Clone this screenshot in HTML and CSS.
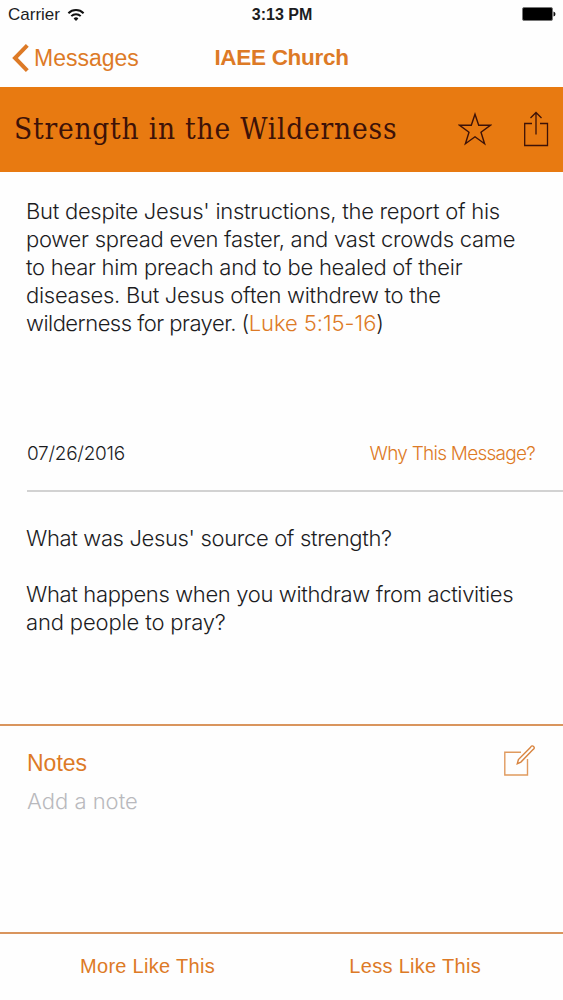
FILE: index.html
```html
<!DOCTYPE html>
<html lang="en">
<head>
  <meta charset="UTF-8">
  <meta name="viewport" content="width=device-width, initial-scale=1.0">
  <title>IAEE Church</title>
  <link rel="stylesheet" href="styles.css">
</head>
<body>
  <div class="status-bar">
    <div class="carrier">
      <span>Carrier</span>
      <svg class="wifi" width="18" height="14" viewBox="0 0 18 14" fill="none" stroke="#111" stroke-width="2">
        <path d="M1.4 5.2a10.7 10.7 0 0 1 15.2 0"/>
        <path d="M4.3 8.1a6.6 6.6 0 0 1 9.4 0"/>
        <path d="M9 13L6.6 10.5a3.4 3.4 0 0 1 4.8 0z" fill="#111" stroke="none"/>
      </svg>
    </div>
    <span class="time">3:13 PM</span>
    <svg class="battery" width="34" height="14" viewBox="0 0 34 14">
      <rect x="0.5" y="0.5" width="30" height="13" rx="1.5" fill="#000" stroke="#777"/>
      <path d="M31.5 4.5q2 .5 2 2.5t-2 2.5z" fill="#111"/>
    </svg>
  </div>

  <div class="nav">
    <a class="back">
      <svg width="17" height="28" viewBox="0 0 17 28" fill="none" stroke="#dd7a26" stroke-width="4">
        <path d="M15.3 1.4L3 14l12.3 12.6"/>
      </svg>
      <span>Messages</span>
    </a>
    <span class="nav-title">IAEE Church</span>
  </div>

  <div class="banner">
    <h1>Strength in the Wilderness</h1>
    <div class="actions">
      <svg width="34" height="34" viewBox="0 0 34 34" fill="none" stroke="#3d1208" stroke-width="1.4">
        <path d="M17 2.2L20.7 13.3H32.4L23 20.3L26.6 31.7L17 24.8L7.4 31.7L11 20.3L1.6 13.3H13.3Z"/>
      </svg>
      <svg width="26" height="36" viewBox="0 0 26 36" fill="none" stroke="#3d1208" stroke-width="1.3">
        <path d="M9 12.5H1.7V34.5H24.5V12.5H17"/>
        <path d="M13 23.5V1.5M7.5 7L13 1.5L18.5 7"/>
      </svg>
    </div>
  </div>

  <div class="message">
    <p class="verse">
      But despite Jesus' instructions, the report of his<br>
      power spread even faster, and vast crowds came<br>
      to hear him preach and to be healed of their<br>
      diseases. But Jesus often withdrew to the<br>
      <span class="tight">wilderness for prayer. (</span><a class="link">Luke 5:15-16</a>)
    </p>
    <div class="meta">
      <span class="date">07/26/2016</span>
      <a class="why">Why This Message?</a>
    </div>
    <div class="questions">
      <p>What was Jesus' source of strength?</p>
      <p>What happens when you withdraw from activities<br><span class="loose">and people to pray?</span></p>
    </div>
  </div>

  <div class="notes">
    <div class="notes-text">
      <h2>Notes</h2>
      <p class="placeholder">Add a note</p>
    </div>
    <svg class="edit" width="32" height="32" viewBox="0 0 32 32" fill="none" stroke="#e09a5e" stroke-width="1.4">
      <path d="M18 7.2H1.8V30H24.5V14"/>
      <path d="M14.3 18.7L15.4 14.6L27.6 2.2Q29-.1 30.6 1.5T30 4.6L17.9 17.1Z" stroke="#d8843f"/>
    </svg>
  </div>

  <div class="footer">
    <a class="more">More Like This</a>
    <a class="less">Less Like This</a>
  </div>
</body>
</html>
```
FILE: styles.css
```css
:root {
  --orange: #e87a11;
  --link: #dd7a26;
  --line: #d9955d;
  --text: #1c1c1e;
}
* {
  margin: 0;
  padding: 0;
  box-sizing: border-box;
}
body {
  width: 563px;
  height: 1000px;
  display: flex;
  flex-direction: column;
  background: #fefefe;
  color: var(--text);
  font-family: "Liberation Sans", Arial, sans-serif;
  overflow: hidden;
}
.status-bar {
  height: 28px;
  display: grid;
  grid-template-columns: 1fr auto 1fr;
  align-items: center;
  padding: 0 7px 0 8px;
  font-size: 17px;
}
.carrier {
  display: flex;
  align-items: center;
  gap: 7px;
  padding-top: 1px;
}
.time {
  padding-top: 1px;
  font-size: 16px;
  font-weight: bold;
}
.battery {
  justify-self: end;
}
.nav {
  height: 59px;
  display: grid;
  grid-template-columns: 1fr auto 1fr;
  align-items: center;
  padding: 1px 12px 0;
  color: var(--link);
  font-size: 23px;
}
.back {
  display: flex;
  align-items: center;
  gap: 5px;
}
.nav-title {
  font-size: 22.5px;
  font-weight: bold;
  letter-spacing: -0.3px;
}
.banner {
  height: 85px;
  display: flex;
  align-items: center;
  justify-content: space-between;
  padding: 0 14px 1px 14px;
  background: var(--orange);
}
.banner h1 {
  font-family: "DejaVu Serif Condensed", "DejaVu Serif", serif;
  font-size: 29.5px;
  font-weight: normal;
  letter-spacing: 0.8px;
  color: #3d1208;
  white-space: nowrap;
}
.actions {
  display: flex;
  align-items: center;
  gap: 31px;
}
.message {
  height: 552px;
  padding: 25px 0 0 26px;
  font-family: Inter, "Liberation Sans", sans-serif;
  font-size: 22px;
  font-weight: 300;
  line-height: 28px;
  letter-spacing: -0.27px;
  white-space: nowrap;
}
.link, .why {
  color: var(--link);
}
.link {
  letter-spacing: -0.05px;
}
.tight {
  letter-spacing: -0.52px;
}
.loose {
  letter-spacing: -0.15px;
}
.meta {
  display: flex;
  justify-content: space-between;
  height: 54px;
  margin: 101px 0 32px 1px;
  padding: 2px 28px 0 0;
  border-bottom: 2px solid #d2d2d2;
  font-size: 19px;
}
.why {
  letter-spacing: -0.75px;
}
.questions {
  letter-spacing: -0.35px;
}
.questions p + p {
  margin-top: 28px;
}
.notes {
  height: 208px;
  display: flex;
  justify-content: space-between;
  padding: 19px 28px 0 27px;
  border-top: 2px solid var(--line);
}
.notes h2 {
  color: var(--link);
  font-size: 23px;
  font-weight: normal;
  line-height: 36px;
}
.placeholder {
  color: #b9b9bd;
  font-family: Inter, "Liberation Sans", sans-serif;
  font-size: 22px;
  font-weight: 300;
  line-height: 40px;
}
.footer {
  height: 68px;
  display: flex;
  align-items: center;
  justify-content: space-between;
  padding: 0 82px 2px 80px;
  border-top: 2px solid var(--line);
  color: var(--link);
  font-size: 20px;
  letter-spacing: 0.3px;
}
```
